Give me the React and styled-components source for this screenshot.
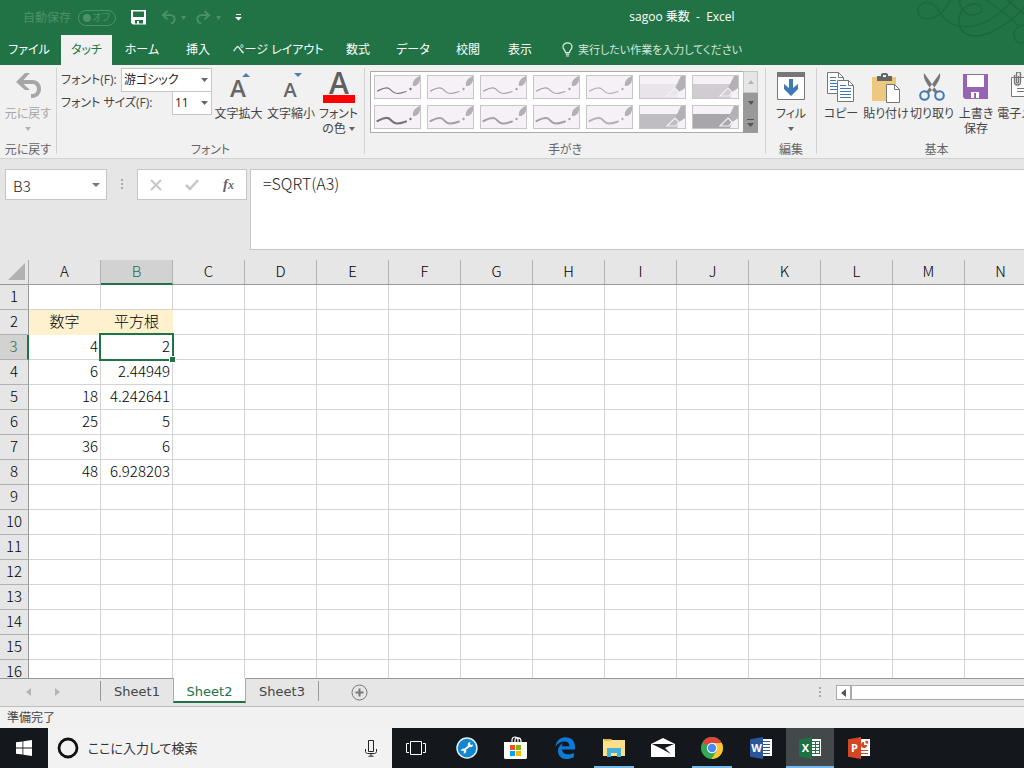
import React from 'react';
import styled, { createGlobalStyle } from 'styled-components';

const GlobalStyle = createGlobalStyle`
  * {
    box-sizing: border-box;
  }

  body {
    margin: 0;
    background: #e6e6e6;
  }

  button,
  input,
  select {
    margin: 0;
    padding: 0;
    border: 0;
    border-radius: 0;
    background: transparent;
    color: inherit;
    font: inherit;
    font-feature-settings: inherit;
  }

  svg {
    display: block;
    flex: none;
  }
`;

const Page = styled.div`
  display: flex;
  flex-direction: column;
  height: 100vh;
  overflow: hidden;
  font-family: 'Open Sans', 'Noto Sans CJK JP', sans-serif;
  font-feature-settings: 'palt';
  font-size: 12px;
  line-height: 15px;
  color: #444;
`;

/* ---------- title bar and tabs ---------- */

const Header = styled.header`
  position: relative;
  flex: none;
  background: #217346;
  color: #fff;
`;

const Swirl = styled.svg`
  position: absolute;
  top: 0;
  right: 0;
`;

const TitleBar = styled.div`
  display: flex;
  align-items: center;
  height: 35px;
`;

const QuickAccess = styled.div`
  display: flex;
  align-items: center;
  width: 340px;
  padding-left: 23px;
  color: #4e9069;
`;

const AutoSave = styled.button`
  display: flex;
  align-items: center;
  gap: 7px;
  margin-right: 15px;
`;

const Switch = styled.span`
  display: flex;
  align-items: center;
  justify-content: space-between;
  width: 38px;
  height: 16px;
  padding: 0 5px 0 4px;
  border: 1px solid #4e9069;
  border-radius: 8px;
  font-size: 10px;
`;

const Knob = styled.i`
  width: 8px;
  height: 8px;
  border-radius: 50%;
  background: #4e9069;
`;

const QuickButton = styled.button`
  display: flex;
  align-items: center;
  gap: 5px;
  margin-right: ${(props) => props.$gap || 10}px;
  color: ${(props) => (props.$active ? '#fff' : '#4e9069')};
`;

const Title = styled.h1`
  flex: 1;
  margin: 0;
  padding-bottom: 3px;
  font-size: 12px;
  font-weight: 400;
  text-align: center;
  white-space: pre;
`;

const Tabs = styled.nav`
  display: flex;
  height: 30px;
`;

const Tab = styled.button`
  width: ${(props) => props.$width}px;
  flex: none;
  padding-bottom: 1px;
  white-space: nowrap;
  background: ${(props) => (props.$active ? '#f1f1f1' : 'transparent')};
  color: ${(props) => (props.$active ? '#217346' : '#fff')};
`;

const TabGap = styled.span`
  width: 3px;
`;

const TellMe = styled.button`
  display: flex;
  align-items: center;
  gap: 5px;
  padding: 0 0 1px 16px;
  font-size: 11px;
  color: #d5e6dc;
`;

/* ---------- ribbon ---------- */

const Ribbon = styled.div`
  display: flex;
  flex: none;
  height: 94px;
  overflow: hidden;
  background: #f1f1f1;
  border-bottom: 1px solid #d2d2d2;
`;

const Group = styled.section`
  display: flex;
  flex-direction: column;
  flex: none;
  width: ${(props) => props.$width}px;
  margin: 3px 0 4px;
  border-right: 1px solid #d2d2d2;
`;

const GroupBody = styled.div`
  display: flex;
  flex: 1;
  padding-left: ${(props) => props.$indent || 0}px;
`;

const GroupName = styled.div`
  height: 12px;
  text-align: center;
  color: #666;
`;

const BigButton = styled.button`
  display: flex;
  flex-direction: column;
  align-items: center;
  flex: none;
  width: ${(props) => props.$width}px;
  color: ${(props) => (props.$disabled ? '#a6a6a6' : '#444')};
  white-space: nowrap;
`;

const IconBox = styled.span`
  display: flex;
  align-items: flex-start;
  justify-content: center;
  height: 38px;
  padding-top: 4px;
`;

const Caption = styled.span`
  display: flex;
  align-items: center;
  gap: 3px;
  height: 15px;

  svg {
    opacity: 0.8;
  }
`;

const FontFields = styled.div`
  width: 155px;
`;

const FieldRow = styled.div`
  display: flex;
  align-items: center;
  justify-content: space-between;
  height: 23px;
  padding-left: 4px;
  white-space: nowrap;
`;

const SelectBox = styled.span`
  display: flex;
  align-items: center;
  width: ${(props) => props.$width}px;
  height: 24px;
  padding: 0 3px 0 2px;
  border: 1px solid #c6c6c6;
  background: #fff;
  color: #666;

  select {
    flex: 1;
    min-width: 0;
    appearance: none;
    outline: none;
    color: #222;
  }
`;

const Gallery = styled.div`
  display: flex;
  height: 62px;
  margin-top: 3px;
  border: 1px solid #ababab;
  border-right: 0;
  background: #fff;
`;

const PenGrid = styled.div`
  display: grid;
  grid-template-columns: repeat(7, 47px);
  grid-auto-rows: 24px;
  gap: 6px;
  padding: 3px 4px 3px 3px;
`;

const PenButton = styled.button`
  border: 1px solid #c6c6c6;
  background: #f5f1f7;
  overflow: hidden;
`;

const GalleryScroll = styled.div`
  display: flex;
  flex-direction: column;
  width: 15px;
  margin: -1px 0;
`;

const ScrollButton = styled.button`
  display: flex;
  align-items: center;
  justify-content: center;
  flex: 1;
  border: ${(props) => (props.$light ? '1px solid #c6c6c6' : 0)};
  background: ${(props) => (props.$light ? '#e6e6e6' : '#999')};
  color: ${(props) => (props.$light ? '#b5b5b5' : '#555')};
`;

/* ---------- formula bar ---------- */

const FormulaBar = styled.div`
  display: flex;
  align-items: flex-start;
  flex: none;
  height: 101px;
  padding: 10px 0 10px 5px;
  background: #e6e6e6;
  font-family: 'Noto Sans CJK JP', sans-serif;
  font-weight: 300;
  color: #222;
`;

const NameBox = styled.div`
  display: flex;
  align-items: center;
  width: 102px;
  height: 31px;
  padding: 0 6px 0 7px;
  border: 1px solid #c6c6c6;
  background: #fff;
  color: #777;

  input {
    flex: 1;
    min-width: 0;
    padding-top: 3px;
    font-size: 15px;
    line-height: 20px;
    color: #222;
  }
`;

const DotsBox = styled.span`
  display: flex;
  align-items: center;
  justify-content: center;
  width: 30px;
  height: 31px;
`;

const FormulaButtons = styled.div`
  display: flex;
  width: 110px;
  height: 31px;
  margin-right: 3px;
  border: 1px solid #c6c6c6;
  background: #fff;

  button {
    display: flex;
    align-items: center;
    justify-content: center;
    flex: 1;
  }
`;

const FormulaInput = styled.input`
  && {
    flex: 1;
    min-width: 0;
    height: 81px;
    padding: 0 12px 54px;
    border: 1px solid #c6c6c6;
    border-right: 0;
    background: #fff;
    font-size: 16px;
  }
`;

/* ---------- sheet ---------- */

const SheetArea = styled.main`
  flex: 1;
  min-height: 0;
  overflow: hidden;
  background: #fff;
`;

const Sheet = styled.table`
  width: ${(props) => props.$columns * 72 + 29}px;
  table-layout: fixed;
  border-collapse: separate;
  border-spacing: 0;
  font-family: 'Noto Sans CJK JP', sans-serif;
  font-size: 15px;
  line-height: 20px;
  color: #000;

  th,
  td {
    height: 25px;
    padding: 0 2px 2px;
    font-weight: 300;
  }
`;

const Corner = styled.th`
  width: 29px;
  background: #e6e6e6;
  border-right: 1px solid #ababab;
  border-bottom: 1px solid #999;

  svg {
    margin-left: 6px;
  }
`;

const ColumnHead = styled.th`
  background: ${(props) => (props.$active ? '#d2d2d2' : '#e6e6e6')};
  color: ${(props) => (props.$active ? '#217346' : '#000')};
  border-right: 1px solid #b1b1b1;
  border-bottom: ${(props) => (props.$active ? '2px solid #217346' : '1px solid #999')};
`;

const RowHead = styled.th`
  background: ${(props) => (props.$active ? '#d2d2d2' : '#e6e6e6')};
  color: ${(props) => (props.$active ? '#217346' : '#000')};
  border-right: ${(props) => (props.$active ? '2px solid #217346' : '1px solid #999')};
  border-bottom: 1px solid #b1b1b1;
`;

const Cell = styled.td`
  position: relative;
  text-align: ${(props) => (props.$head ? 'center' : 'right')};
  background: ${(props) => (props.$head ? '#fff0ce' : '#fff')};
  border-right: 1px solid ${(props) => (props.$head ? '#fff0ce' : '#d4d4d4')};
  border-bottom: 1px solid ${(props) => (props.$head ? '#fff0ce' : '#d4d4d4')};
`;

const Selection = styled.span`
  position: absolute;
  inset: -2px;
  z-index: 1;
  border: 2px solid #217346;

  &::after {
    content: '';
    position: absolute;
    right: -4px;
    bottom: -4px;
    width: 5px;
    height: 5px;
    border: 1px solid #fff;
    background: #217346;
  }
`;

const SheetBar = styled.div`
  display: flex;
  align-items: flex-start;
  flex: none;
  height: 28px;
  border-top: 1px solid #999;
  background: #e6e6e6;
  font-family: 'DejaVu Sans', sans-serif;
  font-size: 13px;
`;

const SheetNav = styled.div`
  display: flex;
  align-items: center;
  justify-content: flex-end;
  gap: 24px;
  width: 100px;
  height: 26px;
  padding-right: 40px;
  color: #b5b5b5;
`;

const SheetTabs = styled.div`
  display: flex;
  align-items: center;
`;

const SheetTab = styled.button`
  width: 73px;
  height: 20px;
  border-left: ${(props) => (props.$first ? '1px solid #999' : 0)};
  border-right: ${(props) => (props.$last ? '1px solid #999' : 0)};

  ${(props) =>
    props.$active &&
    `
    && {
      height: 25px;
      margin-top: -1px;
      padding-top: 4px;
      border: 1px solid #ababab;
      border-top: 0;
      border-bottom: 2px solid #217346;
      background: #fff;
      color: #217346;
    }
  `}
`;

const AddSheet = styled.button`
  margin: 5px auto 0 32px;
`;

const HorizontalScroll = styled.div`
  display: flex;
  width: 188px;
  height: 15px;
  margin-top: 6px;
  border: 1px solid #ababab;
  border-right: 0;
  background: #fff;

  button {
    display: flex;
    align-items: center;
    justify-content: center;
    width: 15px;
    border-right: 2px solid #ababab;
    color: #555;
  }
`;

const SheetDots = styled.span`
  display: flex;
  align-items: center;
  height: 26px;
  margin-right: 15px;
`;

const StatusBar = styled.footer`
  flex: none;
  height: 22px;
  padding: 3px 7px;
  border-top: 1px solid #bdbdbd;
  background: #f1f1f1;
`;

/* ---------- taskbar ---------- */

const Taskbar = styled.div`
  display: flex;
  flex: none;
  height: 40px;
  background: #14181c;
`;

const TaskButton = styled.button`
  position: relative;
  display: flex;
  align-items: center;
  justify-content: center;
  width: 48px;
  height: 40px;
  background: ${(props) => (props.$active ? '#43484b' : 'transparent')};

  &::after {
    content: '';
    position: absolute;
    bottom: 0;
    left: ${(props) => (props.$active ? 0 : 4)}px;
    right: ${(props) => (props.$active ? 0 : 4)}px;
    height: 2px;
    background: ${(props) => (props.$running || props.$active ? '#76b9ed' : 'transparent')};
  }
`;

const SearchBox = styled.label`
  display: flex;
  align-items: center;
  width: 344px;
  padding: 0 15px 0 9px;
  background: #f2f2f2;

  input {
    flex: 1;
    min-width: 0;
    margin-left: 9px;
    font-size: 13px;
    line-height: 20px;
  }

  input::placeholder {
    color: #333;
    opacity: 1;
  }
`;

const Apps = styled.div`
  display: flex;
  gap: 1px;
  margin-left: 3px;
`;

/* ---------- icons ---------- */

const Down = ({ size = 7 }) => (
  <svg width={size} height='4' viewBox='0 0 8 4' preserveAspectRatio='none'>
    <path d='M0 0h8L4 4z' fill='currentColor' />
  </svg>
);

const Up = () => (
  <svg width='6' height='4' viewBox='0 0 8 4' preserveAspectRatio='none'>
    <path d='M0 4h8L4 0z' fill='currentColor' />
  </svg>
);

const SideArrow = ({ right }) => (
  <svg width='5' height='8' viewBox='0 0 5 8'>
    <path d={right ? 'M0 0v8l5-4z' : 'M5 0v8L0 4z'} fill='currentColor' />
  </svg>
);

const Dots = () => (
  <svg width='2' height='11' viewBox='0 0 2 11' fill='#aaa'>
    <path d='M0 0h2v2H0zM0 4h2v2H0zM0 8h2v2H0z' />
  </svg>
);

const UndoArrow = ({ flip }) => (
  <svg width='15' height='15' viewBox='0 0 16 16' fill='none' stroke='currentColor' strokeWidth='2'>
    <g transform={flip ? 'translate(16 0) scale(-1 1)' : undefined}>
      <path d='M7 1L2 5.500l5 4.500M2.500 5.500H10c3 0 5 2 4.500 5-.4 2.200-2 3.500-4 4' />
    </g>
  </svg>
);

const BigUndo = () => (
  <svg width='27' height='27' viewBox='0 0 27 27'>
    <path d='M1 10L10 1h5l-6.500 7H17c6 0 9 4 9 9s-4 9-9 9h-1v-4h1c3 0 5-2 5-5s-2-5-5-5H8.500L15 18h-5z' fill='#a6a6a6' />
  </svg>
);

const SaveIcon = () => (
  <svg width='16' height='15' viewBox='0 0 16 15'>
    <path fillRule='evenodd' fill='#fff' d='M0 0h15v14.500H2L0 13zM2 1.500V7h11V1.500zM4 10v3.500h2V11h2v2.500h4V10z' />
  </svg>
);

const CustomizeIcon = () => (
  <svg width='7' height='7' viewBox='0 0 7 7' fill='#fff'>
    <path d='M1 0h5v1H1zM0 3h7L3.500 6.500z' />
  </svg>
);

const Bulb = () => (
  <svg width='11' height='15' viewBox='0 0 11 15' fill='none' stroke='#e4efe8' strokeWidth='1.200'>
    <path d='M3.500 10.500C3.500 8 1 7.500 1 4.800 1 2.500 3 .8 5.500.8S10 2.500 10 4.800c0 2.700-2.500 3.200-2.500 5.700zM3.500 12.200h4M4 14h3' />
  </svg>
);

const LetterIcon = ({ size, up }) => (
  <svg width='30' height='32' viewBox='0 0 30 32'>
    <text x='14' y='25' textAnchor='middle' fontFamily='Open Sans' fontWeight='600' fontSize={size} fill='#666'>
      A
    </text>
    <path d={up ? 'M18 5h8l-4-4z' : 'M18 1h8l-4 4z'} fill='#4a7ebb' />
  </svg>
);

const FontColorIcon = () => (
  <svg width='32' height='32' viewBox='0 0 32 32'>
    <text x='16' y='22' textAnchor='middle' fontFamily='Open Sans' fontWeight='600' fontSize='30' fill='#5f5f5f'>
      A
    </text>
    <path d='M0 23h32v8H0z' fill='#f00' />
  </svg>
);

const FillIcon = () => (
  <svg width='28' height='28' viewBox='0 0 28 28'>
    <path d='M.5.500h27v27H.5z' fill='#fff' stroke='#777' />
    <path d='M0 0h28v5H0z' fill='#777' />
    <path d='M12 7h4v9l5-4v5l-7 7-7-7v-5l5 4z' fill='#3f78b5' />
  </svg>
);

const CopyIcon = () => (
  <svg width='28' height='31' viewBox='0 0 28 31' fill='#fff' stroke='#777'>
    <path d='M.5.500h11l5 5v16H.5z' />
    <path d='M11.500.500v5h5' fill='none' />
    <path d='M3 5.500h6M3 8.500h6M3 11.500h10M3 14.500h7M3 17.500h7' stroke='#3f78b5' />
    <path d='M10.500 8.500h11l5 5v16h-16z' />
    <path d='M21.500 8.500v5h5' fill='none' />
    <path d='M13 13.500h6M13 16.500h11M13 19.500h11M13 22.500h11M13 25.500h11' stroke='#3f78b5' />
  </svg>
);

const PasteIcon = () => (
  <svg width='28' height='31' viewBox='0 0 28 31'>
    <path d='M0 5h24v24H0z' fill='#edc87e' />
    <path d='M5 4h4V2l2-1h3l2 1v2h4v5H5z' fill='#666' />
    <path d='M11 3h3v2h-3z' fill='#f1f1f1' />
    <path d='M14.500 12.500h8l5 5v13h-13z' fill='#fff' stroke='#777' />
    <path d='M22.500 12.500v5h5' fill='none' stroke='#777' />
  </svg>
);

const CutIcon = () => (
  <svg width='26' height='30' viewBox='0 0 26 30' fill='none'>
    <path d='M5 1l10 14 4 5-3 1-4-4C7 11 4 6 5 1zM21 1L11 15l-4 5 3 1 4-4c5-6 8-11 7-16z' fill='#777' />
    <circle cx='5.500' cy='23.500' r='4.300' stroke='#3f78b5' strokeWidth='2' />
    <circle cx='20.500' cy='23.500' r='4.300' stroke='#3f78b5' strokeWidth='2' />
  </svg>
);

const PurpleSave = () => (
  <svg width='26' height='28' viewBox='0 0 26 28'>
    <path d='M0 2h25v25H2l-2-2z' fill='#9664b4' />
    <path d='M4 3h17v12H4zM6 19h13v7H6z' fill='#fff' />
    <path d='M6 19h13v1H8v6H6zM11 21h2v5h-2zM16 19h3v7h-3z' fill='#9664b4' />
  </svg>
);

const MailAttach = () => (
  <svg width='34' height='28' viewBox='0 0 34 28' fill='none' stroke='#777'>
    <path d='M2.500 5.500h29v19h-29z' fill='#fff' />
    <path d='M8 16.500h16M8 19.500h16' />
    <path d='M5.500 3v7c0 4 6 4 6 0V2c0-3-4-3-4 0v8c0 1.500 2 1.500 2 0V4' strokeWidth='1.400' />
  </svg>
);

const PenPicture = ({ color, width }) => (
  <svg width='45' height='22' viewBox='0 0 45 22'>
    <path d='M2.500 15c4-2 8-4.500 11.500-2.500 3 2 4 5 8 5s6-1 9-2' fill='none' stroke={color} strokeWidth={width} strokeLinecap='round' />
    <path d='M38 10c-1-5 2-8 7-10v4c-1 4-3 6-7 6z' fill='#b3b1b6' />
    <path d='M34 13l1.500-1.500L37 13l-1.500 1.500z' fill={color} />
  </svg>
);

const HighlighterPicture = ({ color }) => (
  <svg width='45' height='22' viewBox='0 0 45 22'>
    <path d='M0 8h45v14H0z' fill={color} />
    <path d='M39 16l6-4v10h-8z' fill='#f5f1f7' />
    <path d='M41 0h4v12l-6 4-4-4z' fill='#b3b1b6' />
    <path d='M27 20l8-8 4 4-3 4z' fill={color} stroke='#f5f1f7' strokeWidth='1.200' />
  </svg>
);

const WindowsIcon = () => (
  <svg width='16' height='16' viewBox='0 0 16 16' fill='#fff'>
    <path d='M0 2.300l6.500-.9v6.100H0zM7.300 1.300L16 0v7.500H7.300zM0 8.400h6.500v6.200L0 13.700zM7.300 8.400H16V16l-8.700-1.200z' />
  </svg>
);

const Ring = () => (
  <svg width='22' height='22' viewBox='0 0 22 22'>
    <circle cx='11' cy='11' r='9' fill='none' stroke='#111' strokeWidth='2.800' />
  </svg>
);

const Mic = () => (
  <svg width='12' height='17' viewBox='0 0 12 17' fill='none' stroke='#222'>
    <path d='M3.500.500h5v11h-5zM.5 9v2.500c0 1 1 2 2 2h7c1 0 2-1 2-2V9M6 13.500V16M3.500 16.200h5' />
  </svg>
);

const TaskView = () => (
  <svg width='20' height='14' viewBox='0 0 20 14' fill='none' stroke='#fff'>
    <path d='M4.500.500h11v13h-11zM3 2.500H.5v9H3M17 2.500h2.500v9H17' />
  </svg>
);

const WrenchApp = () => (
  <svg width='22' height='22' viewBox='0 0 22 22'>
    <circle cx='11' cy='11' r='10' fill='#1187cf' stroke='#dceffa' strokeWidth='1.500' />
    <path d='M7.500 13.500l7-5.500' stroke='#fff' strokeWidth='2' />
    <path d='M17 7.500a2.600 2.600 0 1 1-2.600-2.600l-.4 2 1 1zM5 14a2.600 2.600 0 1 1 2.600 2.600l.4-2-1-1z' fill='#fff' />
  </svg>
);

const StoreIcon = () => (
  <svg width='24' height='24' viewBox='0 0 24 24'>
    <path d='M8 8V4c0-4 6-4 6 0v4M11 7V4c0-3 6-3 6 1v3' fill='none' stroke='#fff' strokeWidth='1.200' />
    <path d='M0 6h23v16l-1 1H1l-1-1z' fill='#fff' />
    <path d='M6 9h5v5H6z' fill='#f25022' />
    <path d='M12 9h5v5h-5z' fill='#7fba00' />
    <path d='M6 15h5v5H6z' fill='#00a4ef' />
    <path d='M12 15h5v5h-5z' fill='#ffb900' />
  </svg>
);

const EdgeIcon = () => (
  <svg width='21' height='22' viewBox='0 0 21 22'>
    <path
      fill='#0c7ad6'
      d='M.3 9.800C1.200 4 5 .3 10.500.3c6 0 9.500 4.200 9.500 9.700v2.500H7c.1 5.200 7.500 6 11.800 3.200v4.600C12 24 3 22 3 14c0-4 2.500-6.800 5.500-8C7.500 7 7 8 6.900 9.300h7.400C14.500 2.500 4.500 3.300.3 9.800z'
    />
  </svg>
);

const ExplorerIcon = () => (
  <svg width='22' height='20' viewBox='0 0 22 20'>
    <path d='M0 1h8l1 1h13v16H0z' fill='#fbe08c' />
    <path d='M1 1h7v2H1z' fill='#e8b43c' />
    <path d='M4 10h14v9h-4v-4H8v4H4z' fill='#45b0d8' />
  </svg>
);

const MailIcon = () => (
  <svg width='24' height='20' viewBox='0 0 24 20'>
    <path d='M0 6L12 0l12 6v13H0z' fill='#fff' />
    <path d='M1 6h22l-9 4 6 6-9-5z' fill='#14181c' />
  </svg>
);

const ChromeIcon = () => (
  <svg width='22' height='22' viewBox='0 0 22 22'>
    <circle cx='11' cy='11' r='11' fill='#35a853' />
    <path d='M11 11L1.500 5.500A11 11 0 0 1 20.500 5.500z' fill='#e0443a' />
    <path d='M11 6h9.800A11 11 0 0 1 10.500 22l5-8z' fill='#fbc62f' />
    <circle cx='11' cy='11' r='5.200' fill='#fff' />
    <circle cx='11' cy='11' r='4.200' fill='#4a8af4' />
  </svg>
);

const OfficeIcon = ({ letter, color }) => (
  <svg width='22' height='22' viewBox='0 0 22 22'>
    <path d='M12 2h10v17H12z' fill='#fff' />
    {letter === 'W' && <path d='M13 4.500h7M13 7.500h7M13 10.500h7M13 13.500h7M13 16.500h7' stroke={color} />}
    {letter === 'X' && <path d='M13 4.500h7M13 7.500h7M13 10.500h7M13 13.500h7M13 16.500h7M16.500 4v13M20.500 4v13' stroke={color} />}
    {letter === 'P' && (
      <>
        <path d='M16 5a3 3 0 1 0 3 3h-3zM17.500 3.500v3h3a3 3 0 0 0-3-3z' fill={color} />
        <path d='M13 13.500h7M13 16.500h7' stroke={color} />
      </>
    )}
    <path d='M0 2.300L13 0v22L0 19.700z' fill={color} />
    <text x='6.500' y='15' textAnchor='middle' fontFamily='Open Sans' fontWeight='700' fontSize='11' fill='#fff'>
      {letter}
    </text>
  </svg>
);

/* ---------- data ---------- */

const tabs = [
  { name: 'ファイル', width: 58 },
  { name: 'タッチ', width: 51, active: true },
  { name: 'ホーム', width: 60 },
  { name: '挿入', width: 52 },
  { name: 'ページ レイアウト', width: 108 },
  { name: '数式', width: 52 },
  { name: 'データ', width: 58 },
  { name: '校閲', width: 52 },
  { name: '表示', width: 52 },
];

const pens = [
  { color: '#77757a', width: 1.2 },
  { color: '#a3a1a6', width: 1.2 },
  { color: '#a3a1a6', width: 1.2 },
  { color: '#a3a1a6', width: 1.2 },
  { color: '#b3b1b6', width: 1.2 },
  { color: '#e8e4ea', marker: true },
  { color: '#d0ccd2', marker: true },
  { color: '#77757a', width: 2.2 },
  { color: '#a3a1a6', width: 2 },
  { color: '#a3a1a6', width: 2 },
  { color: '#a3a1a6', width: 2 },
  { color: '#b3b1b6', width: 2 },
  { color: '#bfbdc1', marker: true },
  { color: '#a8a6aa', marker: true },
];

const cells = {
  A2: '数字',
  B2: '平方根',
  A3: '4',
  B3: '2',
  A4: '6',
  B4: '2.44949',
  A5: '18',
  B5: '4.242641',
  A6: '25',
  B6: '5',
  A7: '36',
  B7: '6',
  A8: '48',
  B8: '6.928203',
};

const selected = { column: 'B', row: 3 };

const apps = [
  { name: 'Support', icon: <WrenchApp /> },
  { name: 'Store', icon: <StoreIcon /> },
  { name: 'Edge', icon: <EdgeIcon /> },
  { name: 'Explorer', icon: <ExplorerIcon />, running: true },
  { name: 'Mail', icon: <MailIcon /> },
  { name: 'Chrome', icon: <ChromeIcon />, running: true },
  { name: 'Word', icon: <OfficeIcon letter='W' color='#2b579a' /> },
  { name: 'Excel', icon: <OfficeIcon letter='X' color='#1e7145' />, active: true },
  { name: 'PowerPoint', icon: <OfficeIcon letter='P' color='#d24726' /> },
];

/* ---------- sections ---------- */

const AppHeader = () => (
  <Header>
    <Swirl width='108' height='46' viewBox='0 0 108 46' fill='none' stroke='#1c673d' strokeWidth='1.500'>
      <path d='M35-1C30 8 22 19 12 19 0 19-1 6 8 3c10-3 14 7 20 15 6 7 20 12 37 6C80 18 90 8 98-1' />
      <path d='M44-1c-2 8 6 17 14 16 10-1 10-10 2-11C50 3 43 12 43 20c0 10 6 16 18 16 16-1 36-16 48-29' />
      <path d='M69-1c12 9 26 18 33 27M90-1l18 15' />
      <path d='M108 25c-8 1-12 8-9 14 2 5 7 5 10 2' />
    </Swirl>
    <TitleBar>
      <QuickAccess>
        <AutoSave>
          自動保存
          <Switch>
            <Knob />
            オフ
          </Switch>
        </AutoSave>
        <QuickButton $active $gap={14} aria-label='保存'>
          <SaveIcon />
        </QuickButton>
        <QuickButton aria-label='元に戻す'>
          <UndoArrow />
          <Down size={5} />
        </QuickButton>
        <QuickButton $gap={14} aria-label='やり直し'>
          <UndoArrow flip />
          <Down size={5} />
        </QuickButton>
        <QuickButton aria-label='カスタマイズ'>
          <CustomizeIcon />
        </QuickButton>
      </QuickAccess>
      <Title>{'sagoo 乗数  -  Excel'}</Title>
    </TitleBar>
    <Tabs>
      {tabs.map((tab, i) => (
        <React.Fragment key={tab.name}>
          <Tab $width={tab.width} $active={tab.active}>
            {tab.name}
          </Tab>
          {i === 0 && <TabGap />}
        </React.Fragment>
      ))}
      <TellMe>
        <Bulb />
        実行したい作業を入力してください
      </TellMe>
    </Tabs>
  </Header>
);

const RibbonButton = ({ icon, lines, width, menu, disabled }) => (
  <BigButton $width={width} $disabled={disabled}>
    <IconBox>{icon}</IconBox>
    {lines.map((line, i) => (
      <Caption key={line}>
        {line}
        {menu && i > 0 && <Down size={6} />}
      </Caption>
    ))}
    {menu && lines.length === 1 && (
      <Caption>
        <Down size={6} />
      </Caption>
    )}
  </BigButton>
);

const AppRibbon = () => (
  <Ribbon>
    <Group $width={57}>
      <GroupBody>
        <RibbonButton icon={<BigUndo />} lines={['元に戻す']} width={56} menu disabled />
      </GroupBody>
      <GroupName>元に戻す</GroupName>
    </Group>
    <Group $width={308}>
      <GroupBody>
        <FontFields>
          <FieldRow>
            <label htmlFor='font'>フォント(F):</label>
            <SelectBox $width={91}>
              <select id='font'>
                <option>游ゴシック</option>
              </select>
              <Down />
            </SelectBox>
          </FieldRow>
          <FieldRow>
            <label htmlFor='size'>フォント サイズ(F):</label>
            <SelectBox $width={40}>
              <select id='size'>
                <option>11</option>
              </select>
              <Down />
            </SelectBox>
          </FieldRow>
        </FontFields>
        <RibbonButton icon={<LetterIcon size={24} up />} lines={['文字拡大']} width={53} />
        <RibbonButton icon={<LetterIcon size={20} />} lines={['文字縮小']} width={52} />
        <RibbonButton icon={<FontColorIcon />} lines={['フォント', 'の色']} width={43} menu />
      </GroupBody>
      <GroupName>フォント</GroupName>
    </Group>
    <Group $width={401}>
      <GroupBody $indent={5}>
        <Gallery>
          <PenGrid>
            {pens.map((pen, i) => (
              <PenButton key={i} aria-label='ペン'>
                {pen.marker ? <HighlighterPicture color={pen.color} /> : <PenPicture color={pen.color} width={pen.width} />}
              </PenButton>
            ))}
          </PenGrid>
          <GalleryScroll>
            <ScrollButton $light aria-label='上'>
              <Up />
            </ScrollButton>
            <ScrollButton aria-label='下'>
              <Down size={6} />
            </ScrollButton>
            <ScrollButton aria-label='その他'>
              <svg width='7' height='8' viewBox='0 0 7 8' fill='currentColor'>
                <path d='M0 0h7v1H0zM0 4h7L3.500 8z' />
              </svg>
            </ScrollButton>
          </GalleryScroll>
        </Gallery>
      </GroupBody>
      <GroupName>手がき</GroupName>
    </Group>
    <Group $width={51}>
      <GroupBody>
        <RibbonButton icon={<FillIcon />} lines={['フィル']} width={50} menu />
      </GroupBody>
      <GroupName>編集</GroupName>
    </Group>
    <Group $width={240}>
      <GroupBody $indent={2}>
        <RibbonButton icon={<CopyIcon />} lines={['コピー']} width={44} />
        <RibbonButton icon={<PasteIcon />} lines={['貼り付け']} width={46} />
        <RibbonButton icon={<CutIcon />} lines={['切り取り']} width={46} />
        <RibbonButton icon={<PurpleSave />} lines={['上書き', '保存']} width={42} />
        <RibbonButton icon={<MailAttach />} lines={['電子メール']} width={58} />
      </GroupBody>
      <GroupName>基本</GroupName>
    </Group>
  </Ribbon>
);

const AppFormulaBar = () => (
  <FormulaBar>
    <NameBox>
      <input aria-label='名前ボックス' defaultValue='B3' />
      <Down size={8} />
    </NameBox>
    <DotsBox>
      <Dots />
    </DotsBox>
    <FormulaButtons>
      <button aria-label='キャンセル'>
        <svg width='12' height='12' viewBox='0 0 12 12' stroke='#c6c6c6' strokeWidth='2'>
          <path d='M1 1l10 10M11 1L1 11' />
        </svg>
      </button>
      <button aria-label='入力'>
        <svg width='14' height='12' viewBox='0 0 14 12' fill='none' stroke='#c6c6c6' strokeWidth='2.500'>
          <path d='M1 6l4 4 8-9' />
        </svg>
      </button>
      <button aria-label='関数の挿入'>
        <svg width='14' height='18' viewBox='0 0 14 18' fill='#666' fontFamily='Liberation Serif' fontStyle='italic' fontWeight='700'>
          <text x='2' y='13' fontSize='15'>
            f
          </text>
          <text x='7' y='13' fontSize='12'>
            x
          </text>
        </svg>
      </button>
    </FormulaButtons>
    <FormulaInput aria-label='数式バー' defaultValue='=SQRT(A3)' />
  </FormulaBar>
);

const AppSheet = () => {
  // only as many rows and columns as the window can show
  const columnCount = Math.min(26, Math.ceil((window.innerWidth - 29) / 72));
  const rowCount = Math.ceil((window.innerHeight - 375) / 25);
  const columns = 'ABCDEFGHIJKLMNOPQRSTUVWXYZ'.slice(0, columnCount).split('');
  const rows = Array.from({ length: rowCount }, (_, i) => i + 1);

  return (
    <SheetArea>
      <Sheet $columns={columnCount}>
        <thead>
          <tr>
            <Corner>
              <svg width='18' height='17' viewBox='0 0 18 17'>
                <path d='M17 0v17H0z' fill='#b1b1b1' />
              </svg>
            </Corner>
            {columns.map((column) => (
              <ColumnHead key={column} $active={column === selected.column}>
                {column}
              </ColumnHead>
            ))}
          </tr>
        </thead>
        <tbody>
          {rows.map((row) => (
            <tr key={row}>
              <RowHead $active={row === selected.row}>{row}</RowHead>
              {columns.map((column) => {
                const value = cells[column + row];
                return (
                  <Cell key={column} $head={row === 2 && value}>
                    {value}
                    {row === selected.row && column === selected.column && <Selection />}
                  </Cell>
                );
              })}
            </tr>
          ))}
        </tbody>
      </Sheet>
    </SheetArea>
  );
};

const AppSheetBar = () => (
  <SheetBar>
    <SheetNav>
      <SideArrow />
      <SideArrow right />
    </SheetNav>
    <SheetTabs>
      <SheetTab $first>Sheet1</SheetTab>
      <SheetTab $active>Sheet2</SheetTab>
      <SheetTab $last>Sheet3</SheetTab>
    </SheetTabs>
    <AddSheet aria-label='新しいシート'>
      <svg width='17' height='17' viewBox='0 0 17 17' fill='none' stroke='#777'>
        <circle cx='8.500' cy='8.500' r='7.500' />
        <path d='M8.500 4.500v8M4.500 8.500h8' strokeWidth='2' />
      </svg>
    </AddSheet>
    <SheetDots>
      <Dots />
    </SheetDots>
    <HorizontalScroll>
      <button aria-label='左へ'>
        <SideArrow />
      </button>
    </HorizontalScroll>
  </SheetBar>
);

const AppTaskbar = () => (
  <Taskbar>
    <TaskButton aria-label='スタート'>
      <WindowsIcon />
    </TaskButton>
    <SearchBox>
      <Ring />
      <input placeholder='ここに入力して検索' aria-label='検索' />
      <Mic />
    </SearchBox>
    <TaskButton aria-label='タスク ビュー'>
      <TaskView />
    </TaskButton>
    <Apps>
      {apps.map((app) => (
        <TaskButton key={app.name} aria-label={app.name} $running={app.running} $active={app.active}>
          {app.icon}
        </TaskButton>
      ))}
    </Apps>
  </Taskbar>
);

const App = () => (
  <Page>
    <GlobalStyle />
    <AppHeader />
    <AppRibbon />
    <AppFormulaBar />
    <AppSheet />
    <AppSheetBar />
    <StatusBar>準備完了</StatusBar>
    <AppTaskbar />
  </Page>
);

export default App;
